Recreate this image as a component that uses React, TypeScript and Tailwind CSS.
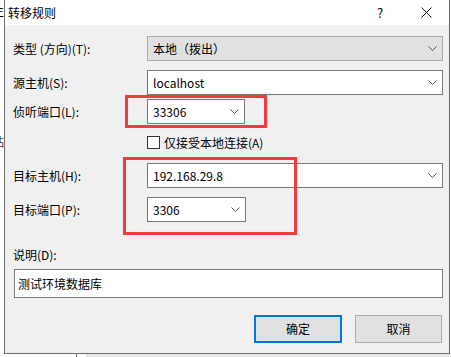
import { useState } from 'react';

const font = "font-['Noto_Sans_CJK_SC','Noto_Sans',sans-serif]";

const Chevron = () => (
  <svg width="9" height="5" viewBox="0 0 9 5" className="shrink-0">
    <path d="M0.5 0.5 L4.5 4.5 L8.5 0.5" fill="none" stroke="#505050" strokeWidth="1" />
  </svg>
);

interface ComboProps {
  value: string;
  width: string;
  readOnly?: boolean;
}

const Combo = ({ value, width, readOnly }: ComboProps) => (
  <div
    className={`${width} h-[25px] flex items-center justify-between pl-[5px] pr-[5px] border ${
      readOnly ? 'bg-[#e1e1e1] border-[#adadad]' : 'bg-white border-[#7a7a7a]'
    }`}
  >
    <span className="text-[12px] leading-none text-black">{value}</span>
    <Chevron />
  </div>
);

const Row = ({ label, children, className }: { label: string; children: React.ReactNode; className?: string }) => (
  <div className={`flex items-center ${className ?? ''}`}>
    <div className="w-[142px] pl-[8px] text-[12px] leading-none text-black">{label}</div>
    {children}
  </div>
);

export default function App() {
  const [localOnly, setLocalOnly] = useState(false);

  return (
    <div className={`w-[451px] h-[357px] bg-white flex flex-col overflow-hidden ${font}`}>
      <div className="flex h-[354px]">
        {/* window behind the dialog, mostly hidden */}
        <div className="relative w-[4px] overflow-hidden">
          <span className="absolute right-0 top-[5px] text-[12px] leading-none text-black">生</span>
          <span className="absolute right-0 top-[136px] text-[12px] leading-none text-[#3a3a3a]">粘</span>
        </div>

        <div className="relative w-[446px] flex flex-col border-l border-r border-b border-[#6e6e6e] bg-[#f0f0f0]">
          {/* title bar */}
          <div className="h-[25px] bg-white flex items-center">
            <span className="pl-[3px] text-[12px] leading-none text-black">转移规则</span>
            <div className="ml-auto flex items-center">
              <span className="w-[46px] text-center text-[13px] leading-none text-black">?</span>
              <span className="w-[46px] flex justify-center">
                <svg width="11" height="11" viewBox="0 0 11 11">
                  <path d="M0.5 0.5 L10.5 10.5 M10.5 0.5 L0.5 10.5" stroke="#111" strokeWidth="1" />
                </svg>
              </span>
            </div>
          </div>

          {/* body */}
          <div className="flex flex-col pr-[6px]">
            <Row label="类型 (方向)(T):" className="mt-[11px]">
              <Combo value="本地（拨出）" width="flex-1" readOnly />
            </Row>
            <Row label="源主机(S):" className="mt-[9px]">
              <Combo value="localhost" width="flex-1" />
            </Row>
            <Row label="侦听端口(L):" className="mt-[4px]">
              <Combo value="33306" width="w-[98px]" />
            </Row>
            <div className="flex items-center mt-[12px] pl-[142px] h-[13px]">
              <button
                onClick={() => setLocalOnly(!localOnly)}
                className="w-[13px] h-[13px] border border-[#333] bg-white flex items-center justify-center"
              >
                {localOnly && (
                  <svg width="9" height="9" viewBox="0 0 9 9">
                    <path d="M1 4.5 L3.5 7 L8 1.5" fill="none" stroke="#000" strokeWidth="1.2" />
                  </svg>
                )}
              </button>
              <span className="ml-[4px] text-[12px] leading-none text-black">仅接受本地连接(A)</span>
            </div>
            <Row label="目标主机(H):" className="mt-[14px]">
              <Combo value="192.168.29.8" width="flex-1" />
            </Row>
            <Row label="目标端口(P):" className="mt-[9px]">
              <Combo value="3306" width="w-[99px]" />
            </Row>
            <div className="mt-[27px] pl-[8px] text-[12px] leading-none text-black">说明(D):</div>
            <div className="mt-[8px] ml-[9px] h-[29px] bg-white border border-[#7a7a7a] flex items-center pl-[3px]">
              <span className="text-[12px] leading-none text-black">测试环境数据库</span>
            </div>
            <div className="mt-[17px] flex justify-end gap-[13px] pr-[1px]">
              <button className="w-[88px] h-[28px] bg-[#e1e1e1] border-2 border-[#0078d7] text-[12px] leading-none text-black">
                确定
              </button>
              <button className="w-[87px] h-[28px] bg-[#e1e1e1] border border-[#adadad] text-[12px] leading-none text-black">
                取消
              </button>
            </div>
          </div>

          {/* annotation boxes */}
          <div className="absolute left-[120px] top-[95px] w-[142px] h-[33px] border-[3px] border-[#f03c3c] pointer-events-none" />
          <div className="absolute left-[118px] top-[157px] w-[174px] h-[78px] border-[3px] border-[#f03c3c] pointer-events-none" />
        </div>
      </div>

      {/* window below the dialog */}
      <div className="flex h-[3px]">
        <div className="w-[76px] bg-white" />
        <div className="w-px bg-[#6e6e6e]" />
        <div className="w-[9px] bg-white" />
        <div className="flex-1 bg-[#e8e8e8]" />
      </div>
    </div>
  );
}
